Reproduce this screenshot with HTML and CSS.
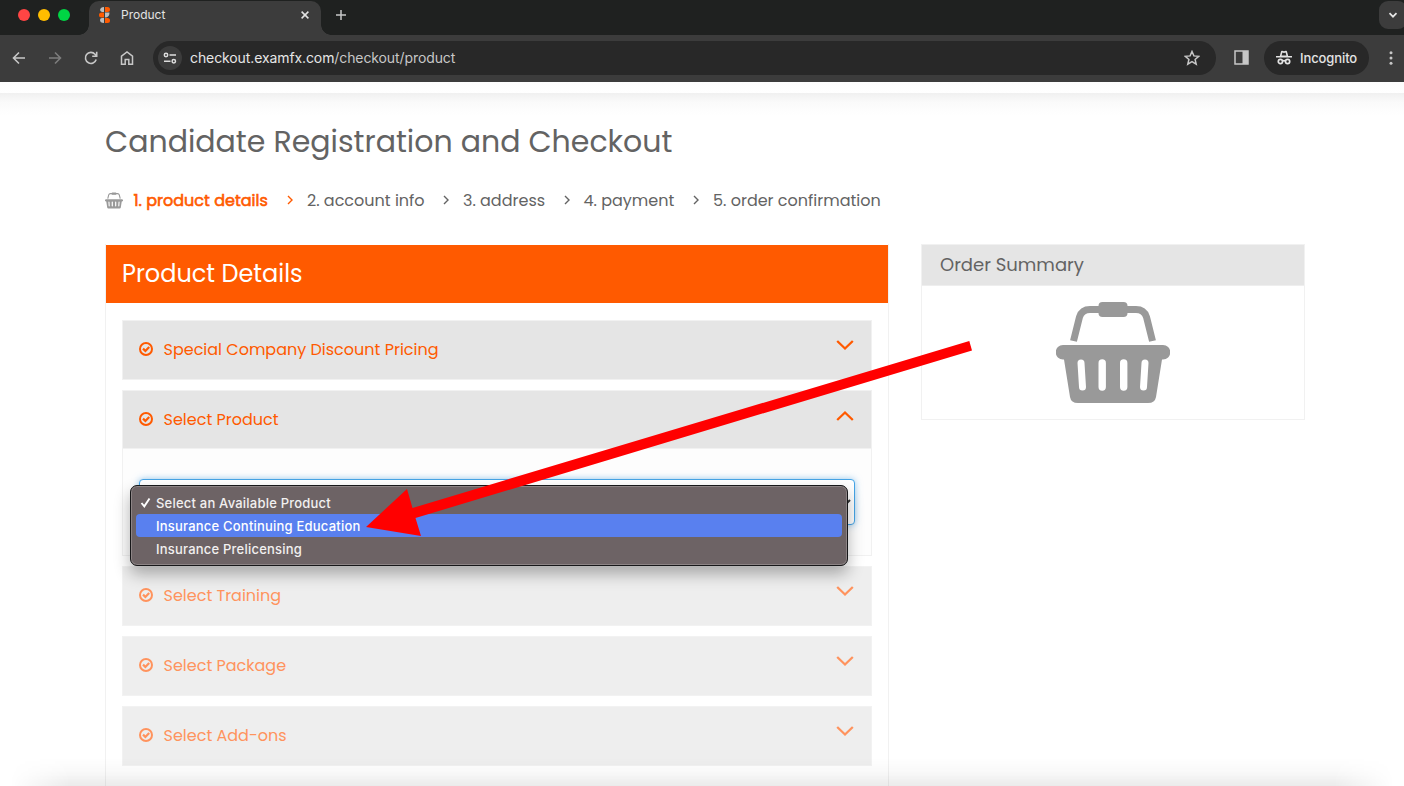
FILE: index.html
```html
<!DOCTYPE html>
<html lang="en">
<head>
<meta charset="utf-8">
<title>Product</title>
<link rel="stylesheet" href="styles.css">
</head>
<body>
<svg class="defs" aria-hidden="true">
  <symbol id="check" viewBox="0 0 14 14"><circle cx="7" cy="7" r="6" fill="none" stroke="currentColor" stroke-width="2"/><path d="M4 6.600l2.400 2.300L10.200 5" fill="none" stroke="currentColor" stroke-width="2.200"/></symbol>
  <symbol id="chev" viewBox="0 0 18 12"><path d="M1.200 2l7.800 7.500L16.800 2" fill="none" stroke="currentColor" stroke-width="2.300"/></symbol>
  <symbol id="sep" viewBox="0 0 6 10"><path d="M1 1l4 4-4 4" fill="none" stroke="currentColor" stroke-width="1.400"/></symbol>
  <symbol id="basket" viewBox="0 0 114 102">
    <path d="M17.500 39L23.500 15Q26 7.500 34 7.500H80Q88 7.500 90.500 15L96.500 39" fill="none" stroke="currentColor" stroke-width="7"/>
    <rect x="42.500" y="0" width="29" height="15" rx="4" fill="currentColor"/>
    <path fill-rule="evenodd" fill="currentColor" d="M7 43H107a7 7 0 0 1 0 14.500H106L100 95Q99 101 92 101H22Q15 101 14 95L8 57.500H7A7 7 0 0 1 7 43ZM21.500 61L23 85a3.500 3.500 0 0 0 7 0L28.500 61a3.500 3.500 0 0 0-7 0ZM42.500 61V85a3.700 3.700 0 0 0 7.400 0V61a3.700 3.700 0 0 0-7.400 0ZM64 61V85a3.700 3.700 0 0 0 7.400 0V61a3.700 3.700 0 0 0-7.400 0ZM85.500 61L84 85a3.500 3.500 0 0 0 7 0L92.500 61a3.500 3.500 0 0 0-7 0Z"/>
  </symbol>
</svg>

<header class="browser">
  <div class="tabstrip">
    <div class="lights"><i class="red"></i><i class="yellow"></i><i class="green"></i></div>
    <div class="tab">
      <svg class="favicon" width="12" height="16" viewBox="0 0 12 16"><path d="M5 0v5H3.500A2.500 2.500 0 0 1 1 3Q1.500 0 5 0ZM6 5.500H10.500Q10.500 10.500 6 10.500ZM1 13Q1 11 3 11H5V16Q1 16 1 13Z" fill="#bdbdbd"/><path d="M6 0h2.500a2.500 2.500 0 0 1 0 5H6ZM5 5.500v5H2.500a2.500 2.500 0 0 1 0-5ZM6 11h2.500a2.500 2.500 0 0 1 0 5H6Z" fill="#ff5a00"/></svg>
      <span class="tab-title">Product</span>
      <svg class="close" width="8" height="8" viewBox="0 0 8 8"><path d="M.6.6l6.800 6.800M7.400.6L.6 7.400" stroke="#e3e3e3" stroke-width="1.500"/></svg>
    </div>
    <svg class="plus" width="10" height="10" viewBox="0 0 10 10"><path d="M5 0v10M0 5h10" stroke="#c7c7c7" stroke-width="1.500"/></svg>
    <div class="tab-search"><svg width="10" height="7" viewBox="0 0 10 7"><path d="M1.500 1.200L5 4.700 8.500 1.200" fill="none" stroke="#e6e6e6" stroke-width="1.700"/></svg></div>
  </div>
  <div class="toolbar">
    <svg class="nav" width="14" height="14" viewBox="0 0 14 14"><path d="M13 7H1.800M7 1.500L1.500 7 7 12.500" fill="none" stroke="#c7c7c7" stroke-width="1.600"/></svg>
    <svg class="nav" width="14" height="14" viewBox="0 0 14 14"><path d="M1 7h11.200M7 1.500L12.500 7 7 12.500" fill="none" stroke="#7d7d7d" stroke-width="1.600"/></svg>
    <svg class="nav" width="14" height="14" viewBox="0 0 14 14"><path d="M12.200 8.500A5.500 5.500 0 1 1 11 3.200L12.500 5M12.700.8V5.300H8.200" fill="none" stroke="#c7c7c7" stroke-width="1.600"/></svg>
    <svg class="nav" width="14" height="14" viewBox="0 0 14 14"><path d="M1.500 13.200V5.200L7 1l5.500 4.200v8H8.800V8.500H5.200v4.700Z" fill="none" stroke="#c7c7c7" stroke-width="1.500"/></svg>
    <div class="omnibox">
      <span class="site-info"><svg width="14" height="12" viewBox="0 0 14 12"><g fill="none" stroke="#dedede" stroke-width="1.500"><circle cx="3" cy="3" r="1.700"/><path d="M6.500 3H13M1 9.200H7.500"/><circle cx="10.800" cy="9.200" r="1.700"/></g></svg></span>
      <span class="url"><b>checkout.examfx.com</b>/checkout/product</span>
      <svg class="star" width="16" height="16" viewBox="0 0 16 16"><path d="M8 1.500l1.900 4.400 4.800.4-3.600 3.100 1.100 4.700L8 11.600l-4.200 2.500 1.100-4.700L1.300 6.300l4.800-.4Z" fill="none" stroke="#c7c7c7" stroke-width="1.500"/></svg>
    </div>
    <svg class="panel" width="15" height="15" viewBox="0 0 15 15"><path d="M1 1H14V14H1Z" fill="none" stroke="#c7c7c7" stroke-width="1.500"/><path d="M8.500 1H14V14H8.500Z" fill="#c7c7c7"/></svg>
    <div class="incognito">
      <svg width="16" height="15" viewBox="0 0 16 15"><path d="M3.800 6L5 1.500Q5.200.5 6.200.8L8 1.300l1.800-.5Q10.800.5 11 1.500L12.200 6H16V7.500H0V6Z" fill="#e3e3e3"/><path d="M5.600 5.500L6.400 2.500 8 3l1.600-.5.8 3Z" fill="#282828"/><g fill="none" stroke="#e3e3e3" stroke-width="1.700"><circle cx="4.400" cy="11.500" r="2.100"/><circle cx="11.600" cy="11.500" r="2.100"/><path d="M6.500 11.100Q8 10.200 9.500 11.100"/></g></svg>
      <span>Incognito</span>
    </div>
    <svg class="kebab" width="4" height="14" viewBox="0 0 4 14" fill="#c7c7c7"><circle cx="2" cy="1.700" r="1.500"/><circle cx="2" cy="7" r="1.500"/><circle cx="2" cy="12.300" r="1.500"/></svg>
  </div>
</header>
<div class="site-bar"></div>

<main class="page">
  <h1>Candidate Registration and Checkout</h1>
  <nav class="steps">
    <svg class="mini" width="18" height="17"><use href="#basket"/></svg>
    <span class="step active s1">1. product details</span><svg class="sep active" width="6" height="10"><use href="#sep"/></svg>
    <span class="step s2">2. account info</span><svg class="sep" width="6" height="10"><use href="#sep"/></svg>
    <span class="step s3">3. address</span><svg class="sep" width="6" height="10"><use href="#sep"/></svg>
    <span class="step s4">4. payment</span><svg class="sep" width="6" height="10"><use href="#sep"/></svg>
    <span class="step">5. order confirmation</span>
  </nav>
  <div class="columns">
    <section class="details">
      <h2>Product Details</h2>
      <div class="accordion">
        <div class="item"><div class="head"><svg class="check" width="14" height="14"><use href="#check"/></svg><span>Special Company Discount Pricing</span><svg class="chev" width="18" height="12"><use href="#chev"/></svg></div></div>
        <div class="item open"><div class="head"><svg class="check" width="14" height="14"><use href="#check"/></svg><span>Select Product</span><svg class="chev up" width="18" height="12"><use href="#chev"/></svg></div>
          <div class="body"><div class="select"><svg width="10" height="7" viewBox="0 0 10 7"><path d="M1 1l4 4 4-4" fill="none" stroke="#333" stroke-width="2"/></svg></div>
            <ul class="menu">
              <li><svg class="tick" width="11" height="11" viewBox="0 0 11 11"><path d="M1.500 6l2.800 3.300L9.500 1.500" fill="none" stroke="#fff" stroke-width="1.900"/></svg><span>Select an Available Product</span></li>
              <li class="hover"><span>Insurance Continuing Education</span></li>
              <li><span>Insurance Prelicensing</span></li>
            </ul>
          </div></div>
        <div class="item off"><div class="head"><svg class="check" width="14" height="14"><use href="#check"/></svg><span>Select Training</span><svg class="chev" width="18" height="12"><use href="#chev"/></svg></div></div>
        <div class="item off"><div class="head"><svg class="check" width="14" height="14"><use href="#check"/></svg><span>Select Package</span><svg class="chev" width="18" height="12"><use href="#chev"/></svg></div></div>
        <div class="item off"><div class="head"><svg class="check" width="14" height="14"><use href="#check"/></svg><span>Select Add-ons</span><svg class="chev" width="18" height="12"><use href="#chev"/></svg></div></div>
      </div>
    </section>
    <aside class="summary">
      <h3>Order Summary</h3>
      <div class="cart"><svg width="114" height="102"><use href="#basket"/></svg></div>
    </aside>
  </div>
</main>
<svg class="arrow" width="1404" height="786" viewBox="0 0 1404 786"><path d="M366 527L407 489 412.500 508 969.300 341 972 350.500 415.500 518 421 536Z" fill="#f00"/></svg>
<div class="bottom-shade"></div>
</body>
</html>
```
FILE: styles.css
```css
* { box-sizing: border-box; }
html, body { height: 100%; }
body { display: flex; flex-direction: column; margin: 0; position: relative; overflow: hidden; background: #fff; font-family: Poppins, Inter, "Liberation Sans", sans-serif; color: #636363; }
svg { display: block; flex: none; }
.defs { display: none; }

.browser { flex: none; font-family: Inter, "Liberation Sans", sans-serif; background: #3c3c3c; height: 82px; }
.tabstrip { display: flex; align-items: flex-start; height: 35px; background: #1f2120; }
.lights { display: flex; gap: 8px; padding: 9px 0 0 18px; width: 89px; }
.lights i { width: 12px; height: 12px; border-radius: 50%; }
.red { background: #ff4544; }
.yellow { background: #ffbd00; }
.green { background: #00d544; }
.tab { position: relative; display: flex; align-items: center; width: 232px; height: 34px; margin-top: 1px; padding: 0 12px 6px 10px; border-radius: 10px 10px 0 0; background: #3c3c3c; }
.tab::before, .tab::after { content: ""; position: absolute; bottom: 0; width: 10px; height: 10px; }
.tab::before { left: -10px; background: radial-gradient(circle at 0 0, transparent 9.5px, #3c3c3c 10px); }
.tab::after { right: -10px; background: radial-gradient(circle at 100% 0, transparent 9.5px, #3c3c3c 10px); }
.tab-title { flex: 1; margin-left: 10px; padding-bottom: 2px; font-size: 12px; color: #e3e3e3; }
.plus { margin: 10px 0 0 15px; }
.tab-search { display: flex; align-items: center; justify-content: center; width: 28px; height: 28px; margin: 1px -3px 0 auto; border-radius: 9px; background: #3c3c3c; }
.toolbar { display: flex; align-items: center; height: 47px; padding: 0 11px 2px 12px; }
.nav { margin-right: 22px; }
.omnibox { display: flex; align-items: center; width: 1063px; height: 34px; margin-left: -3px; padding: 0 16px 0 5px; border-radius: 17px; background: #282828; }
.site-info { display: flex; align-items: center; justify-content: center; width: 24px; height: 24px; border-radius: 50%; background: #3c3c3c; }
.url { margin-left: 8px; font-size: 14px; letter-spacing: -.1px; color: #c7c7c7; }
.url b { font-weight: 400; color: #e6e6e6; }
.star { margin-left: auto; }
.panel { margin-left: 18px; }
.incognito { display: flex; align-items: center; gap: 8px; width: 105px; height: 34px; margin-left: 15px; padding-left: 12px; border-radius: 17px; background: #282828; color: #e3e3e3; font-size: 13px; letter-spacing: -.1px; font-weight: 500; }
.kebab { margin-left: auto; }
.site-bar { flex: none; height: 33px; background: linear-gradient(#fcfcfc 0, #fff 11px, #f0f0f0 11px, #fafafa 20px, #fff 33px); }

.page { flex: 1; min-height: 0; display: flex; flex-direction: column; padding: 0 99px 0 105px; overflow: hidden; }
h1, h2, h3 { margin: 0; font-weight: 400; }
h1 { flex: none; height: 54px; line-height: 54px; font-size: 30px; }
.steps { flex: none; display: flex; align-items: center; height: 30px; margin-top: 16px; font-size: 16px; font-weight: 400; white-space: nowrap; }
.mini { margin-right: 10px; color: #999; }
.step { flex: none; }
.step.active { padding-left: .5px; color: #ff5a00; -webkit-text-stroke: .6px #ff5a00; }
.sep { margin: 0 14px 0 18px; }
.sep.active { color: #ff5a00; }
.s1 { width: 136px; }
.s2 { width: 118px; }
.s3 { width: 82.5px; }
.s4 { width: 91.5px; }
.columns { flex: 1; min-height: 0; display: flex; align-items: flex-start; gap: 32px; margin-top: 29px; }
.details { width: 784px; height: 100%; border: solid #f1f1f1; border-width: 0 1px; }
h2 { height: 58px; margin-top: 1px; padding-left: 16px; line-height: 57px; font-size: 24px; color: #fff; background: #ff5a00; }
.accordion { display: flex; flex-direction: column; gap: 10px; padding: 17px 16px 0; }
.item { border: 1px solid #f1f1f1; }
.head { display: flex; align-items: center; height: 58px; padding: 0 17px 2px 16px; background: #e5e5e5; color: #ff5a00; font-size: 16px; font-weight: 400; }
.head span { margin-left: 10.5px; }
.chev { margin: -9px 0 0 auto; }
.up { margin-top: -7px; transform: scaleY(-1); }
.off { border-color: #f2f2f2; }
.off .head { background: #eee; color: #ff935d; }
.open .head { height: 57px; padding-bottom: 1px; }
.body { position: relative; height: 107px; padding: 30px 16px; border-top: 1px solid #f1f1f1; background: #fdfdfd; }
.select { display: flex; align-items: center; justify-content: flex-end; height: 46px; padding-right: 3px; border: 1px solid #45a4e6; border-radius: 4px; background: #fff; box-shadow: 0 0 7px rgba(80,165,230,.6); }
.menu { position: absolute; left: 7px; top: 36px; width: 718px; height: 81px; margin: 0; padding: 5px 4px 4px; list-style: none; border: 1px solid #171719; border-radius: 7px; background: #6d6365; box-shadow: inset 0 0 0 1px #8c8485, 0 8px 16px rgba(0,0,0,.3); font: 500 13px Inter, "Liberation Sans", sans-serif; letter-spacing: .21px; color: #f2f0f0; z-index: 2; }
.menu li { display: flex; align-items: center; height: 23px; margin: 0 1px; padding-left: 20px; border-radius: 4px; }
.menu .tick { margin: 0 5px 0 -16px; }
.menu .hover { background: #5980ef; color: #fff; }
.summary { width: 384px; border: 1px solid #f1f1f1; }
h3 { height: 41px; padding-left: 18px; line-height: 40px; font-size: 18px; background: #e5e5e5; border-bottom: 1px solid #eee; }
.cart { display: flex; justify-content: center; height: 133px; padding-top: 16px; color: #999; }
.arrow { position: absolute; left: 0; top: 0; z-index: 5; }
.bottom-shade { position: absolute; left: 10px; right: 10px; bottom: 0; height: 28px; background: linear-gradient(transparent, rgba(0,0,0,.025) 50%, rgba(0,0,0,.08)); -webkit-mask-image: linear-gradient(90deg, transparent, #000 60px, #000 calc(100% - 60px), transparent); mask-image: linear-gradient(90deg, transparent, #000 60px, #000 calc(100% - 60px), transparent); }
```
